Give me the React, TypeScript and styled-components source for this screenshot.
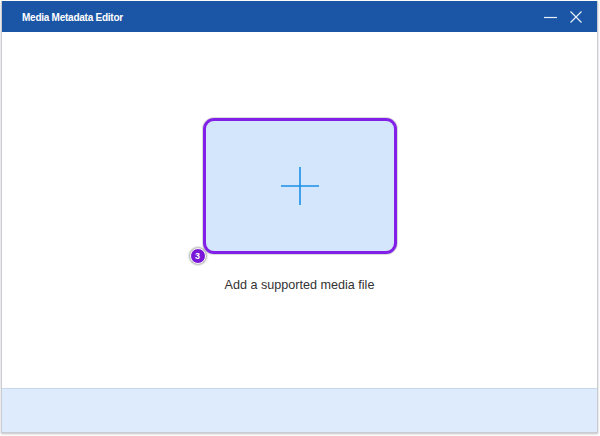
import React from "react";
import styled, { createGlobalStyle } from "styled-components";

const Global = createGlobalStyle`
  html, body { margin: 0; padding: 0; background: #ffffff; }
  body { width: 600px; height: 436px; overflow: hidden; }
`;

const Window = styled.div`
  margin: 1px 2px 0 1px;
  width: 597px;
  height: 432px;
  box-sizing: border-box;
  display: flex;
  flex-direction: column;
  background: #ffffff;
  border: 1px solid #c9ccd2;
  border-top: none;
  box-shadow: 0 1px 2px rgba(0, 0, 0, 0.25);
  font-family: "Liberation Sans", sans-serif;
`;

const TitleBar = styled.div`
  height: 31px;
  flex: none;
  background: #1b55a6;
  display: flex;
  align-items: center;
  padding: 0 0 0 20px;
`;

const Title = styled.div`
  color: #ffffff;
  font-size: 10px;
  font-weight: bold;
  letter-spacing: -0.25px;
  flex: 1;
  padding-top: 1px;
`;

const WinButton = styled.button<{ $mr: number }>`
  width: 26px;
  height: 31px;
  border: none;
  background: transparent;
  padding: 0;
  display: flex;
  align-items: center;
  justify-content: center;
  margin-right: ${(p) => p.$mr}px;
`;

const Main = styled.div`
  flex: 1;
  display: flex;
  flex-direction: column;
  align-items: center;
  padding-top: 86px;
`;

const DropWrap = styled.div`
  position: relative;
`;

const DropBox = styled.div`
  width: 194px;
  height: 136px;
  box-sizing: border-box;
  background: #d3e6fb;
  border: 3px solid #8220e8;
  border-radius: 11px;
  box-shadow: 0 0 0 1px rgba(150, 150, 160, 0.35);
  display: flex;
  align-items: center;
  justify-content: center;
`;

const Badge = styled.div`
  position: absolute;
  left: -13px;
  bottom: -10px;
  width: 14px;
  height: 14px;
  border-radius: 50%;
  background: #7a16d8;
  border: 1.5px solid #ffffff;
  box-shadow: 0 0 2px 1px rgba(0, 0, 0, 0.35);
  color: #ffffff;
  font-size: 9px;
  font-weight: bold;
  display: flex;
  align-items: center;
  justify-content: center;
`;

const Caption = styled.div`
  margin-top: 24px;
  font-size: 12.6px;
  color: #333333;
`;

const Footer = styled.div`
  height: 43px;
  flex: none;
  background: #deebfc;
  border-top: 1px solid #c8d6ea;
`;

export default function App() {
  return (
    <>
      <Global />
      <Window>
        <TitleBar>
          <Title>Media Metadata Editor</Title>
          <WinButton $mr={0} aria-label="minimize">
            <svg width="14" height="14" viewBox="0 0 14 14">
              <line x1="1" y1="7.5" x2="14" y2="7.5" stroke="#e6eefa" strokeWidth="1.2" />
            </svg>
          </WinButton>
          <WinButton $mr={8} aria-label="close">
            <svg width="14" height="14" viewBox="0 0 14 14">
              <path d="M1.5 1.5 L12.5 12.5 M12.5 1.5 L1.5 12.5" stroke="#e6eefa" strokeWidth="1.2" />
            </svg>
          </WinButton>
        </TitleBar>
        <Main>
          <DropWrap>
            <DropBox>
              <svg width="40" height="40" viewBox="0 0 40 40">
                <path d="M20 1 V39 M1 20 H39" stroke="#1b8fe8" strokeWidth="1.6" />
              </svg>
            </DropBox>
            <Badge>3</Badge>
          </DropWrap>
          <Caption>Add a supported media file</Caption>
        </Main>
        <Footer />
      </Window>
    </>
  );
}
